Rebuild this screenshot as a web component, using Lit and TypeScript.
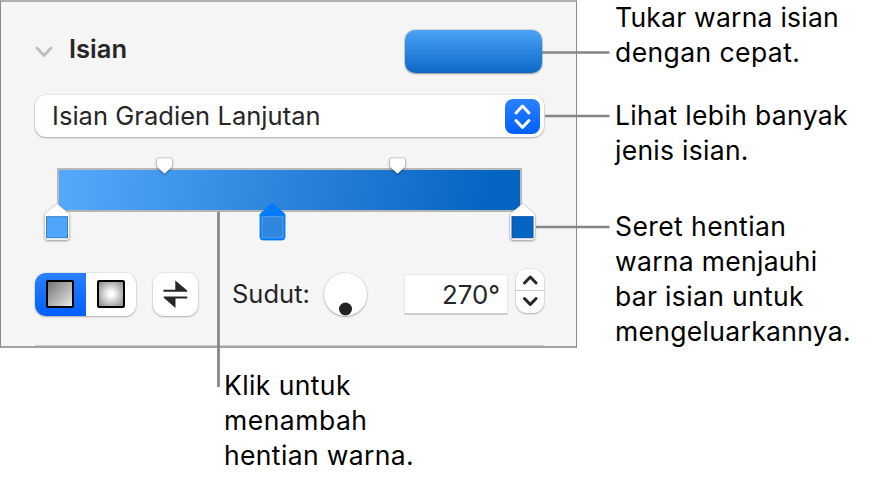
import { LitElement, html, css, svg } from "lit";
import { customElement } from "lit/decorators.js";
import { styleMap } from "lit/directives/style-map.js";

type Line = [text: string, spacing: number];

const notes: { cls: string; lines: Line[] }[] = [
  { cls: "swap-note", lines: [["Tukar warna isian", 0.23], ["dengan cepat.", 0.42]] },
  { cls: "type-note", lines: [["Lihat lebih banyak", 0.36], ["jenis isian.", 0.28]] },
  {
    cls: "drag-note",
    lines: [["Seret hentian", 0.42], ["warna menjauhi", 0.3], ["bar isian untuk", 0.33], ["mengeluarkannya.", 0.31]],
  },
];
const addNote: Line[] = [["Klik untuk", 0.4], ["menambah", 0.5], ["hentian warna.", 0.36]];

const stops = [
  { x: 57, fill: "#4fa5fa", edge: "#357fc6", body: "#fff", selected: false },
  { x: 272.5, fill: "#2e86dd", edge: "#5a9fe6", body: "#007aff", selected: true },
  { x: 522.5, fill: "#0665c3", edge: "#0353a6", body: "#fff", selected: false },
];
const midpoints = [164.5, 397.5];

@customElement("app-root")
export class AppRoot extends LitElement {
  static styles = css`
    :host {
      display: block;
      position: relative;
      width: 884px;
      height: 481px;
      overflow: hidden;
      background: #fff;
      color: #000;
      font-family: Inter, "Liberation Sans", sans-serif;
    }
    .page { display: grid; grid-template-columns: 577px 1fr; grid-template-rows: 348px 133px; }
    .panel {
      box-sizing: border-box;
      background: #f5f5f5;
      border: 1px solid #8a8a8c;
      border-top: 2px solid #b0b0b0;
      border-bottom: 2px solid #a2a2a2;
      padding: 28px 32px 0 34px;
      color: #262626;
      font-size: 25.5px;
      line-height: 32px;
    }
    .head { display: flex; height: 43px; align-items: center; padding-right: 2px; }
    .title { font-weight: 600; margin-left: 14px; margin-top: -5px; flex: 1; }
    .chev { width: 20px; height: 14px; margin-top: 1px; }
    .swatch {
      width: 137px; height: 43px; border-radius: 10px;
      background: linear-gradient(#4ba2f7, #0b69c6);
      box-shadow: 0 0 0 1px #0000001c, 0 1px 2px #00000050;
    }
    .popup {
      display: flex; align-items: center; box-sizing: border-box;
      width: 509px; height: 42px; margin-top: 22px; padding: 0 4px 0 17px;
      border-radius: 11px; background: #fff;
      box-shadow: 0 0 0 1px #0000000c, 0 1px 2px #00000048;
    }
    .popup span { flex: 1; letter-spacing: 0.04px; }
    .arrows { width: 35px; height: 35px; border-radius: 8px; background: linear-gradient(#2a81ff, #0060ff); }
    .bar {
      box-sizing: border-box; width: 465px; height: 44px; margin: 31px 0 0 22px;
      border: 2px solid #b9b9b9; border-bottom-color: #b5b5b2;
      background: linear-gradient(98deg, #54a8fc 2%, #2e86dd 46%, #0464c2 94%);
    }
    .controls { display: flex; align-items: center; width: 509px; height: 44px; margin-top: 60px; }
    .controls > * { flex-shrink: 0; }
    .segments {
      display: flex; width: 101px; height: 43px; border-radius: 11px; background: #fff; overflow: hidden;
    }
    .shade { border-radius: 11px; box-shadow: 0 0 0 1px #0000000c, 0 1px 2px #00000040; }
    .segment { display: flex; flex: 1; align-items: center; justify-content: center; }
    .segment.on { background: linear-gradient(#2a80ff, #0060ff); }
    .tile { box-sizing: border-box; width: 28px; height: 28px; border: 2px solid #000; border-radius: 2px; }
    .linear { background: linear-gradient(135deg, #747474, #e8e8e8); }
    .radial { background: radial-gradient(circle, #fff 12%, #8c8c8c 95%); }
    .swap { width: 45px; height: 43px; margin-left: 17px; background: #fff; }
    .label { width: 92px; box-sizing: border-box; padding-left: 34px; margin-right: 34px; white-space: nowrap; }
    .dial { width: 43px; height: 43px; border-radius: 50%; background: #fff; box-shadow: 0 0 0 1px #0000000f, 0 1px 2px #00000045; }
    .field {
      box-sizing: border-box; width: 104px; height: 41px; margin-left: 37px; padding-right: 7px;
      font-size: 25.8px; line-height: 39px; text-align: right; background: #fff; border: 1px solid #e8e8e8; border-bottom: 2px solid #cfcfcf;
    }
    .stepper { width: 28px; height: 44px; margin: -6px 0 0 8px; border-radius: 11px; background: #fff; }
    .divider { height: 1px; width: 509px; margin-top: 29px; background: #d0d0d0; }
    .notes { padding-left: 38px; font-size: 26.5px; line-height: 35px; }
    .note { white-space: nowrap; }
    .type-note { margin-top: 28px; }
    .drag-note { margin-top: 41px; }
    .add-note { padding: 20px 0 0 224px; font-size: 26.5px; line-height: 35px; }
    .overlay { position: absolute; left: 0; top: 0; pointer-events: none; }
    .lift { filter: drop-shadow(0 1px 1px #00000055); }
    svg { display: block; }
  `;

  private lines(list: Line[]) {
    return list.map(([text, s]) => html`<div style=${styleMap({ letterSpacing: `${s}px` })}>${text}</div>`);
  }

  private stop(s: (typeof stops)[number]) {
    return svg`<g class=${s.selected ? "" : "lift"} transform="translate(${s.x} 203)">
      <path d="M0 .5 L12.5 11 V34 Q12.5 37 9.5 37 H-9.5 Q-12.5 37 -12.5 34 V11 Z"
        fill=${s.body} stroke=${s.selected ? "#007aff" : "#00000024"} stroke-width=".8"/>
      <rect x="-10.5" y="13.7" width="21" height="21" fill=${s.fill} stroke=${s.edge}/>
    </g>`;
  }

  render() {
    return html`
      <div class="page">
        <section class="panel">
          <div class="head">
            <svg class="chev" viewBox="0 0 20 14"><path d="M2 3 L9 10.5 L16 3" fill="none" stroke="#bdbdbd" stroke-width="2.7" stroke-linecap="round" stroke-linejoin="round"/></svg>
            <div class="title">Isian</div>
            <div class="swatch"></div>
          </div>
          <div class="popup">
            <span>Isian Gradien Lanjutan</span>
            <svg class="arrows" viewBox="0 0 35 35"><path d="M11 14 L17.5 7 L24 14 M11 21.5 L17.5 28.5 L24 21.5" fill="none" stroke="#fff" stroke-width="3" stroke-linecap="round" stroke-linejoin="round"/></svg>
          </div>
          <div class="bar"></div>
          <div class="controls">
            <div class="segments shade">
              <div class="segment on"><div class="tile linear"></div></div>
              <div class="segment"><div class="tile radial"></div></div>
            </div>
            <svg class="swap shade" viewBox="0 0 45 43">
              <path d="M10.5 16.8 H22.3 V7.5 L34.2 17.5 V18.8 H10.5 Z M34.2 25.4 H22.5 V35 L10.7 24.7 V23.4 H34.2 Z" fill="#262626"/>
            </svg>
            <div class="label">Sudut:</div>
            <svg class="dial" viewBox="0 0 43 43"><circle cx="21.5" cy="36" r="6.5" fill="#222"/></svg>
            <div class="field">270°</div>
            <svg class="stepper shade" viewBox="0 0 28 44">
              <path d="M0 21.5 H28" stroke="#ccc"/>
              <path d="M8.5 14 L14.3 8 L20.1 14 M8.5 29.5 L14.3 35.5 L20.1 29.5" fill="none" stroke="#262626" stroke-width="3" stroke-linecap="round" stroke-linejoin="round"/>
            </svg>
          </div>
          <div class="divider"></div>
        </section>
        <aside class="notes">
          ${notes.map((n) => html`<div class="note ${n.cls}">${this.lines(n.lines)}</div>`)}
        </aside>
        <div class="note add-note">${this.lines(addNote)}</div>
      </div>
      <svg class="overlay" width="884" height="481" viewBox="0 0 884 481">
        <path d="M542 52.5 H609.5 M545 116 H609.5 M536 227 H609.5 M218.5 212 V387" fill="none" stroke="#858585" stroke-width="2.7"/>
        ${midpoints.map((x) => svg`<path class="lift" transform="translate(${x} 158)" d="M-6.5 0 H6.5 Q8 0 8 1.5 V8.5 L1 15 Q0 16 -1 15 L-8 8.5 V1.5 Q-8 0 -6.5 0Z" fill="#fff" stroke="#0000003a" stroke-width=".7"/>`)}
        ${stops.map((s) => this.stop(s))}
      </svg>
    `;
  }
}
